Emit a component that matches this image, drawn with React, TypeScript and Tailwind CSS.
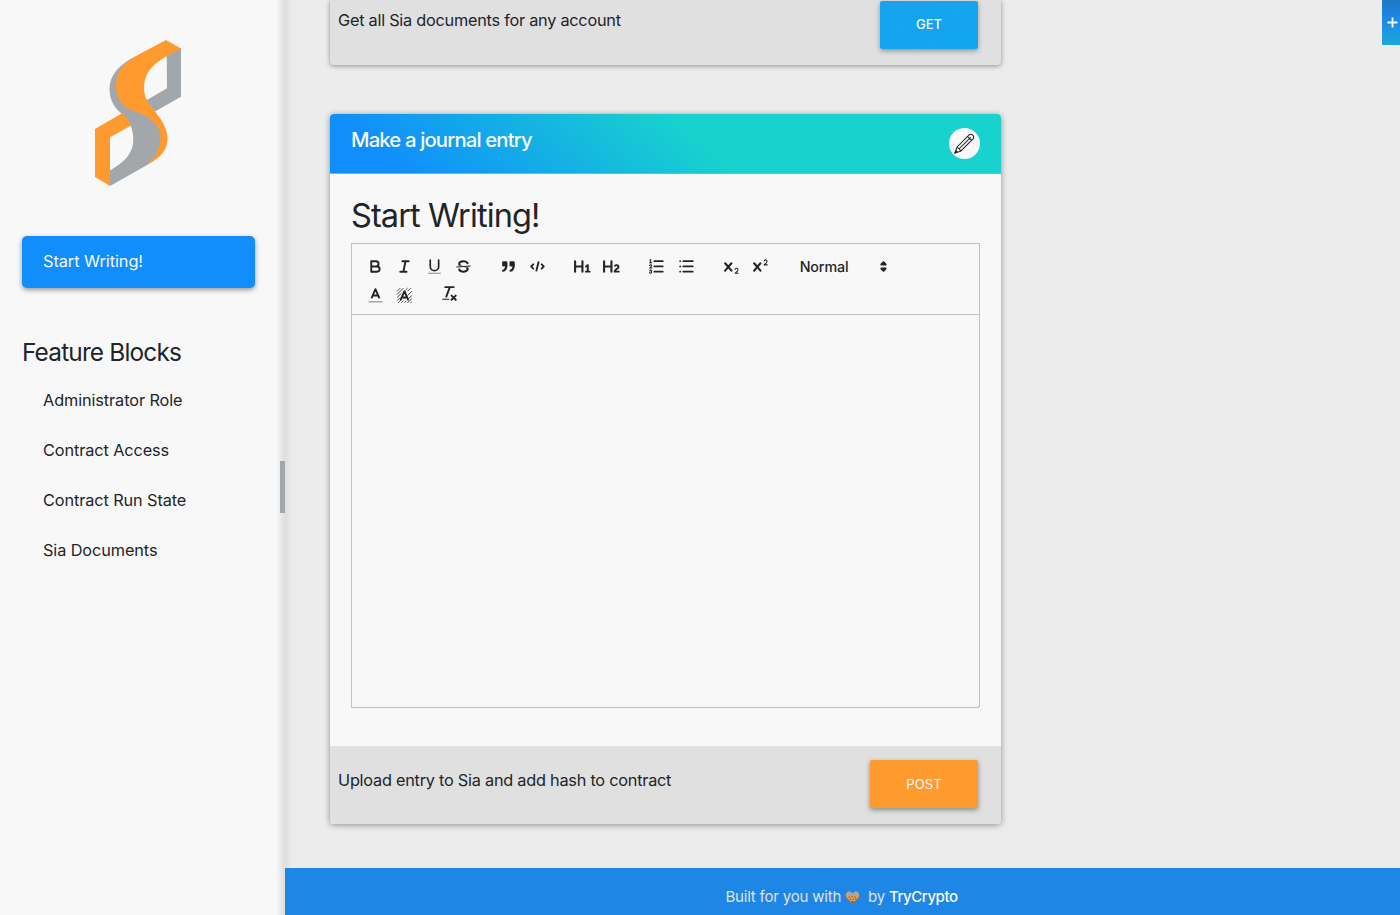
import React from "react";

const INTER = "font-['Inter','Liberation_Sans',sans-serif]";

function Logo() {
  return (
    <svg className="h-[148px] w-[90px]" viewBox="94 39 90 148">
      <path fill="#a2a7ab" d="M166.700 54L181 48V96.700L155 111.500L146 100.500L167 88.300Z" />
      <path fill="#a2a7ab" d="M133 57.500C118 66 109.500 76 109.500 89C109.500 102 116 109 122.500 114.500C129 120 133.300 129 133.300 139C133.300 153 126 161 110 170.500V186L148 164.500L162 150V128L140 110L121 100L117 84Z" />
      <path fill="#ff9a2e" d="M166 40L181 48.500L167.300 56C152 64 144 74 144 88C144 99 150 105 155 111.500C162 120 167.500 129 167.500 139C167.500 150 160 158 148 164.500C156 157 160.500 147 160.500 137C160.500 126 151 117.500 139 113C124 108 116 101 116 85C116 72 124 63 134 57Z" />
      <path fill="#ff9a2e" d="M95 129L122 113.300C126 117 129 121 131 125.500L110 137.300V186L95 177Z" />
    </svg>
  );
}

const X_PATH =
  "M9.65,5.241a1,1,0,0,0-1.409.108L6,7.964,3.759,5.349A1,1,0,0,0,2.192,6.59178Q2.21541,6.6213,2.241,6.649L4.684,9.5,2.241,12.35A1,1,0,0,0,3.71,13.70722q0.02557-.02768.049-0.05722L6,11.036,8.241,13.65a1,1,0,1,0,1.567-1.24277Q9.78459,12.3777,9.759,12.35L7.316,9.5,9.759,6.651A1,1,0,0,0,9.65,5.241Z";

const F = { fill: "#212529", stroke: "none" };

const ICONS: Record<string, React.ReactNode> = {
  bold: <path strokeWidth="1.800" d="M5 4H9.500A2.500 2.500 0 0 1 9.500 9H5ZM5 9H10.500A2.500 2.500 0 0 1 10.500 14H5Z" />,
  italic: <path strokeWidth="1.800" d="M7 4H13M5 14H11M8 14L10 4" />,
  underline: (
    <>
      <path d="M5 3V9a4 4 0 0 0 8 0V3" strokeWidth="1.600" />
      <rect x="3" y="15" width="12" height="1" fill="#8b9095" stroke="none" />
    </>
  ),
  strike: (
    <>
      <path d="M15.500 8.500L2.500 9.500" strokeWidth="1" />
      <path {...F} d="M9.007,8C6.542,7.791,6,7.519,6,6.5,6,5.792,7.283,5,9,5c1.571,0,2.765.679,2.969,1.309a1,1,0,0,0,1.9-.617C13.356,4.106,11.354,3,9,3,6.2,3,4,4.538,4,6.5a3.2,3.2,0,0,0,.5,1.843Z" />
      <path {...F} d="M8.984,10C11.457,10.208,12,10.479,12,11.5c0,0.708-1.283,1.5-3,1.5-1.571,0-2.765-.679-2.969-1.309a1,1,0,1,0-1.9.617C4.644,13.894,6.646,15,9,15c2.8,0,5-1.538,5-3.5a3.2,3.2,0,0,0-.5-1.843Z" />
    </>
  ),
  quote: (
    <>
      <path fill="#212529" d="M4 5h3v3H4ZM11 5h3v3h-3Z" />
      <path fill="#212529" d="M7 8c0 4.031-3 5-3 5M14 8c0 4.031-3 5-3 5" />
    </>
  ),
  code: <path strokeWidth="1.800" d="M5 7L3 9L5 11M13 7L15 9L13 11M10 5L8 13" />,
  h1: (
    <path {...F} d="M10,4V14a1,1,0,0,1-2,0V10H3v4a1,1,0,0,1-2,0V4A1,1,0,0,1,3,4V8H8V4a1,1,0,0,1,2,0Zm6.06787,9.209H14.98975V7.59863a.54085.54085,0,0,0-.605-.60547h-.62744a1.01119,1.01119,0,0,0-.748.29688L11.645,8.56641a.5435.5435,0,0,0-.022.8584l.28613.30762a.53861.53861,0,0,0,.84717.0332l.09912-.08789a1.2137,1.2137,0,0,0,.2417-.35254h.02246s-.01123.30859-.01123.60547V13.209H12.041a.54085.54085,0,0,0-.605.60547v.43945a.54085.54085,0,0,0,.605.60547h4.02686a.54085.54085,0,0,0,.605-.60547v-.43945A.54085.54085,0,0,0,16.06787,13.209Z" />
  ),
  h2: (
    <path {...F} d="M16.73975,13.81445v.43945a.54085.54085,0,0,1-.605.60547H11.855a.58392.58392,0,0,1-.64893-.60547V14.0127c0-2.90527,3.39941-3.42187,3.39941-4.55469a.77675.77675,0,0,0-.84717-.78125,1.17684,1.17684,0,0,0-.83594.38477c-.2749.26367-.561.374-.85791.13184l-.4292-.34082c-.30811-.24219-.38525-.51758-.1543-.81445a2.97155,2.97155,0,0,1,2.45361-1.17676,2.45393,2.45393,0,0,1,2.68408,2.40918c0,2.45312-3.1792,2.92676-3.27832,3.93848h2.79443A.54085.54085,0,0,1,16.73975,13.81445ZM9,3A.99974.99974,0,0,0,8,4V8H3V4A1,1,0,0,0,1,4V14a1,1,0,0,0,2,0V10H8v4a1,1,0,0,0,2,0V4A.99974.99974,0,0,0,9,3Z" />
  ),
  ordered: (
    <>
      <path strokeWidth="1.700" d="M7 4H15M7 9H15M7 14H15" />
      <path strokeWidth="1" d="M2.500 5.500H4.500M4.500,10.500h-2c0-.234,1.850-1.076,1.850-2.234A0.959,0.959,0,0,0,2.500,8.156M2.500,14.846a0.959,0.959,0,0,0,1.850-.109A0.700,0.700,0,0,0,3.750,14a0.688,0.688,0,0,0,.6-0.736,0.959,0.959,0,0,0-1.850-.109" />
      <path {...F} d="M3.5,6A0.5,0.5,0,0,1,3,5.5V3.085l-0.276.138A0.5,0.5,0,0,1,2.053,3c-0.124-.247-0.023-0.324.224-0.447l1-.5A0.5,0.5,0,0,1,4,2.500v3A0.5,0.5,0,0,1,3.5,6Z" />
    </>
  ),
  bullet: <path strokeWidth="1.700" d="M6 4H15M6 9H15M6 14H15M3 4H3M3 9H3M3 14H3" />,
  sub: (
    <>
      <path {...F} d="M15.5,15H13.861a3.858,3.858,0,0,0,1.914-2.975,1.8,1.8,0,0,0-1.6-1.751A1.921,1.921,0,0,0,12.021,11.7a0.50013,0.50013,0,1,0,.957.291h0a0.914,0.914,0,0,1,1.053-.725,0.81,0.81,0,0,1,.744.762c0,1.076-1.16971,1.86982-1.93971,2.43082A1.45639,1.45639,0,0,0,12,15.5a0.5,0.5,0,0,0,.5.5h3A0.5,0.5,0,0,0,15.5,15Z" />
      <path {...F} d={X_PATH} />
    </>
  ),
  sup: (
    <>
      <path {...F} d="M15.5,7H13.861a4.015,4.015,0,0,0,1.914-2.975,1.8,1.8,0,0,0-1.6-1.751A1.922,1.922,0,0,0,12.021,3.7a0.5,0.5,0,1,0,.957.291,0.917,0.917,0,0,1,1.053-.725,0.81,0.81,0,0,1,.744.762c0,1.077-1.164,1.925-1.934,2.486A1.423,1.423,0,0,0,12,7.5a0.5,0.5,0,0,0,.5.5h3A0.5,0.5,0,0,0,15.5,7Z" />
      <path {...F} d={X_PATH} />
    </>
  ),
  color: (
    <>
      <path d="M3 15H15" stroke="#a2a7ab" strokeWidth="1.500" />
      <path strokeWidth="1.800" d="M5.500 11L9 3L12.500 11M11.630 9H6.380" />
    </>
  ),
  background: (
    <>
      <path strokeWidth="0.800" strokeLinecap="butt" d="M2 5L5 2M2 8L8 2M2 11L6 7M2 14L5 11M3 16L6 13M6 16L8 14M9 16L11 14M12 16L16 12M15 16L16 15M13 12L16 9M12 9L16 5M10 4L12 2M12 5L15 2" />
      <path strokeWidth="1.800" d="M5.500 13L9 5L12.500 13M11.630 11H6.380" />
    </>
  ),
  clean: (
    <>
      <path strokeWidth="1.800" d="M5 3H13M6 12L9.350 3M11 11L15 15M15 11L11 15" />
      <rect {...F} x="2" y="14" width="7" height="1" rx="0.500" />
    </>
  ),
};

function Tool({ name }: { name: string }) {
  return (
    <button type="button" aria-label={name} className="flex h-[25px] w-[29.400px] items-center justify-center">
      <svg viewBox="0 0 18 18" className="size-[18.900px]" fill="none" stroke="#212529" strokeWidth="2" strokeLinecap="round" strokeLinejoin="round">
        {ICONS[name]}
      </svg>
    </button>
  );
}

function Group({ names }: { names: string[] }) {
  return (
    <div className="mr-[15.500px] flex">
      {names.map((n) => (
        <Tool key={n} name={n} />
      ))}
    </div>
  );
}

function Sidebar() {
  return (
    <aside className="relative flex w-[285px] shrink-0 flex-col bg-[linear-gradient(to_right,#f8f8f8_276px,#ebebeb_280px,#e0e0e0_284px)]">
      <div className="pt-[39px] pl-[94px]">
        <Logo />
      </div>
      <a className="mt-[48.500px] ml-[22px] flex h-[52px] w-[233px] items-center rounded-[5px] bg-[#108efb] pl-[21px] text-[16.300px] tracking-[-0.050px] text-[#f8f8f8] shadow-[0_2px_5px_rgba(0,0,0,0.400)]">
        Start Writing!
      </a>
      <h2 className="mt-[48px] pl-[22px] text-[24.400px] leading-[32px] tracking-[-0.820px]">Feature Blocks</h2>
      <nav className="mt-[7px] flex flex-col pl-[43px] text-[16.300px] leading-[50.300px] tracking-[-0.100px]">
        <a>Administrator Role</a>
        <a>Contract Access</a>
        <a>Contract Run State</a>
        <a>Sia Documents</a>
      </nav>
      <div className="absolute top-[461px] right-0 h-[52px] w-[5.500px] bg-[#a2a7ab]" />
    </aside>
  );
}

export default function App() {
  return (
    <div className={`flex h-[915px] w-[1400px] overflow-hidden bg-[#ececec] text-[#212529] ${INTER}`}>
      <Sidebar />
      <div className="relative flex min-w-0 flex-1 flex-col">
        <main className="flex flex-1 flex-col bg-[linear-gradient(to_right,#e0e0e0_2px,#ececec_7px)] pl-[45px]">
          <section className="flex h-[64.500px] w-[671px] justify-between rounded-b-[4px] bg-[#e0e0e0] pr-[23px] pl-[8px] shadow-[0_1px_5px_rgba(0,0,0,0.400)]">
            <p className="pt-[8px] text-[16.300px] leading-[24px] tracking-[-0.250px]">Get all Sia documents for any account</p>
            <button type="button" className="mt-px h-[48px] w-[98px] rounded-[2px] bg-[linear-gradient(165deg,#18a3ee,#12a6ee)] text-[13px] font-medium text-[#f8f8f8] shadow-[0_2px_5px_rgba(0,0,0,0.350)]">
              GET
            </button>
          </section>

          <section className="mt-[49.500px] flex h-[710px] w-[671px] flex-col overflow-hidden rounded-[4px] bg-[#f8f8f8] shadow-[0_1px_6px_rgba(0,0,0,0.400)]">
            <header className="flex h-[60px] shrink-0 items-start justify-between border-b border-[#a2a7ab] bg-[linear-gradient(40deg,#108efb_10%,#18d3cd_56%)] bg-origin-border pr-[21px] pl-[21px]">
              <h3 className="pt-[12px] text-[20.300px] leading-[28px] font-medium tracking-[-0.850px] text-[#f8f8f8]">Make a journal entry</h3>
              <div className="mt-[14px] flex size-[31px] items-center justify-center rounded-full bg-[#f8f8f8]">
                <svg viewBox="0 0 24 24" className="size-[21px]" fill="none" stroke="#212529" strokeWidth="1.200" strokeLinejoin="round">
                  <path d="M1 23L3.500 16L17 2.500Q19 0.500 21.500 2.500Q23.500 5 21.500 7L8 20.500ZM3.500 16L8 20.500M6 18L19 5M15.500 4L20 8.500" />
                  <path fill="#212529" d="M1 23L2.200 20L4 21.800Z" />
                </svg>
              </div>
            </header>
            <div className="flex flex-1 flex-col px-[21px] pt-[22px]">
              <h1 className="text-[32.500px] leading-[40px] tracking-[-0.890px]">Start Writing!</h1>
              <div className="mt-[7px] flex h-[72px] w-[629px] flex-col border border-[#bfc1c4] pt-[8px] pl-[8.500px]">
                <div className="flex h-[29.400px] items-center">
                  <Group names={["bold", "italic", "underline", "strike"]} />
                  <Group names={["quote", "code"]} />
                  <Group names={["h1", "h2"]} />
                  <Group names={["ordered", "bullet"]} />
                  <Group names={["sub", "sup"]} />
                  <div className="flex w-[102px] items-center justify-between pl-[9px] text-[14.300px] font-medium">
                    <span className="tracking-[-0.150px]">Normal</span>
                    <svg viewBox="0 0 18 18" className="size-[19px]" fill="#212529" stroke="#212529" strokeWidth="2" strokeLinejoin="round">
                      <path d="M7 11L9 13L11 11ZM7 7L9 5L11 7Z" />
                    </svg>
                  </div>
                </div>
                <div className="flex h-[29px] items-center">
                  <Group names={["color", "background"]} />
                  <div className="mb-[5px]">
                    <Tool name="clean" />
                  </div>
                </div>
              </div>
              <div className="h-[393px] w-[629px] rounded-br-[3px] border border-t-0 border-[#bfc1c4]" />
            </div>
            <footer className="flex h-[78px] shrink-0 justify-between bg-[#e0e0e0] pr-[23px] pl-[8px]">
              <p className="pt-[22px] text-[16.300px] leading-[24px] tracking-[-0.240px]">Upload entry to Sia and add hash to contract</p>
              <button type="button" className="mt-[14px] h-[48px] w-[108px] rounded-[2px] bg-[#ff9a2e] pt-[2px] text-[13.200px] text-[#f8f8f8] shadow-[0_2px_5px_rgba(0,0,0,0.400)]">
                POST
              </button>
            </footer>
          </section>
        </main>
        <footer className="flex h-[47px] shrink-0 items-center justify-center bg-[#1e87e5] pt-[11px] pr-[2px] text-[15px] tracking-[-0.200px] text-[#e0e0e0]">
          <span>Built for you with</span>
          <svg viewBox="0 0 16 16" className="mr-[8px] ml-[4px] size-[15px]">
            <path fill="#e39a4c" stroke="#6b5a48" strokeWidth="0.500" d="M8 15L1.500 8.500C-1 5 2 1 5 1.500Q7 2 8 4Q9 2 11 1.500C14 1 17 5 14.500 8.500Z" />
            <path fill="#a9a7a3" d="M1 6C0.500 3 3 1.200 5 1.500Q7 2 8 4Q9 2 11 1.500C13 1.200 15.500 3 15 6L12 5.500L8 7L4 5.500Z" />
            <path fill="#4a4038" d="M4 7h1v1H4ZM7 7h1v1H7ZM10 7h1v1h-1ZM5.500 9.500h1v1h-1ZM8.500 9.500h1v1h-1ZM11 9h1v1h-1ZM7 12h2v1.500H7Z" />
          </svg>
          <span>by</span>
          <span className="ml-[4px] font-medium tracking-[-0.450px] text-[#f8f8f8]">TryCrypto</span>
        </footer>
        <button type="button" aria-label="Add" className="absolute top-0 right-0 flex h-[45px] w-[18px] items-center justify-center bg-[linear-gradient(to_bottom,#1e78c4,#1e87e5_40%,#1aa8dc)]">
          <svg viewBox="0 0 12 12" className="ml-[3px] size-[11px] shrink-0" stroke="#f8f8f8" strokeWidth="2">
            <path d="M6 0.500V11.500M0.500 6H11.500" />
          </svg>
        </button>
      </div>
    </div>
  );
}
